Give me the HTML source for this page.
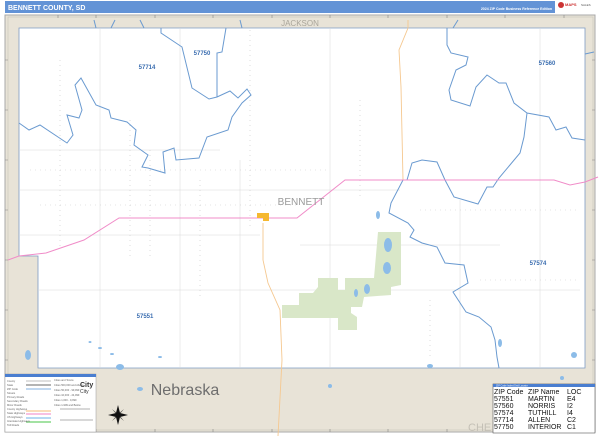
<!DOCTYPE html>
<html><head><meta charset="utf-8"><style>
html,body{margin:0;padding:0;background:#fff;width:600px;height:436px;overflow:hidden;font-family:"Liberation Sans",sans-serif}
</style></head><body>
<svg width="600" height="436" viewBox="0 0 600 436" xmlns="http://www.w3.org/2000/svg" font-family="Liberation Sans, sans-serif">
<rect x="5" y="1" width="550" height="12" fill="#6393d6"/>
<text x="8" y="10" font-size="7" font-weight="bold" fill="#fff">BENNETT COUNTY, SD</text>
<text x="552" y="10" font-size="3.5" fill="#fff" text-anchor="end" font-weight="bold">2024 ZIP Code Business Reference Edition</text>
<circle cx="561" cy="5" r="3" fill="#c33"/><text x="565" y="6" font-size="4" fill="#c33" font-weight="bold">MAPS</text>
<text x="581" y="6" font-size="3" fill="#555">SALES</text>
<rect x="5" y="15" width="590" height="417" fill="#e8e3d7" stroke="#a8a8a8" stroke-width="1"/>
<rect x="8" y="17" width="585" height="413" fill="none" stroke="#c8c4b8" stroke-width="0.6"/>
<g stroke="#888" stroke-width="0.6">
<path d="M58 15v3M96 15v3M155 15v3M213 15v3M272 15v3M330 15v3M388 15v3M447 15v3M505 15v3M564 15v3M58 429v3M96 429v3M155 429v3M213 429v3M272 429v3M330 429v3M388 429v3M447 429v3M505 429v3M564 429v3M5 60h3M5 110h3M5 160h3M5 210h3M5 260h3M5 310h3M5 360h3M5 410h3M592 60h3M592 110h3M592 160h3M592 210h3M592 260h3M592 310h3M592 360h3M592 410h3"/>
</g>
<text x="300" y="26" font-size="8" fill="#a9a59a" text-anchor="middle">JACKSON</text>
<text x="185" y="395" font-size="16" fill="#6e6e6e" text-anchor="middle">Nebraska</text>
<text x="468" y="431" font-size="11" fill="#c4c0b6">CHE</text>
<path d="M19 28H585V368H38V256H19Z" fill="#fff" stroke="#7e9cc4" stroke-width="0.8"/>
<g stroke="#d8d8d8" stroke-width="0.5" fill="none">
<path d="M19 190H400M38 290H580M19 150H220M100 28V368M180 28V368M240 160V368M330 28V368M460 200V368M540 28V368M19 235H260M300 245H500"/>
</g>
<g stroke="#c9c9c9" stroke-width="0.6" stroke-dasharray="1 4" fill="none">
<path d="M30 170H330M40 205H300M60 60V250M130 120V260M150 150V260M200 180V300M250 30V230M360 100V200M420 210H580M430 300V360M480 280H580"/>
</g>
<g fill="none" stroke="#6a9ad0" stroke-width="1">
<path d="M161 28L161 33L176 43L182 47L192 88L209 99L217 97L230 91L238 98L247 89L251 95L242 103L232 117L228 130L207 137L199 158L176 160L174 148L163 152L165 173L148 168L142 167L148 155L134 145L136 130L127 122L111 118L109 110L96 105L81 78L75 85L82 110L79 118L67 115L73 135L67 143L40 125L29 130L19 123"/>
<path d="M226 28L222 52L217 53L217 97"/>
<path d="M94 20L96 28M115 20L111 28M140 20L144 28M240 20L242 28M458 20L453 28M585 54L594 52"/>
<path d="M447 28L447 45L451 53L468 57L466 65L456 70L449 90L451 100L470 106L476 87L487 75L499 83L506 83L514 103L527 113L549 117L556 130L566 127L572 138L585 140"/>
<path d="M527 113L524 137L520 153L499 178L493 187L487 187L478 204L454 197L445 180L437 162L422 160L412 163L407 180L403 180L391 203L389 213L408 223L414 230L410 237L422 243L437 247L445 263L464 265L468 283L453 292L466 312L479 317L491 327L495 340L497 357L499 368"/>
</g>
<path d="M408 20L408 28L399 50L401 87L403 180" fill="none" stroke="#f5c890" stroke-width="0.9"/>
<path d="M263 223L263 260L268 283L280 310L282 360L278 436" fill="none" stroke="#f5c890" stroke-width="0.9"/>
<path d="M282 305L299 305L299 293L313 293L318 287L318 278L338 278L338 290L345 290L345 278L374 278L378 232L401 232L401 285L391 287L391 295L364 297L362 307L351 307L351 313L357 317L357 330L338 330L338 318L282 318Z" fill="#d9e7c8"/>
<g fill="#8cbce8">
<ellipse cx="388" cy="245" rx="4" ry="7"/><ellipse cx="387" cy="268" rx="4" ry="6"/><ellipse cx="367" cy="289" rx="3" ry="5"/><ellipse cx="356" cy="293" rx="2" ry="4"/><ellipse cx="378" cy="215" rx="2" ry="4"/><ellipse cx="500" cy="343" rx="2" ry="4"/><ellipse cx="574" cy="355" rx="3" ry="3"/><ellipse cx="28" cy="355" rx="3" ry="5"/><ellipse cx="120" cy="367" rx="4" ry="3"/><ellipse cx="140" cy="389" rx="3" ry="2"/><ellipse cx="330" cy="386" rx="2" ry="2"/><ellipse cx="430" cy="366" rx="3" ry="2"/><ellipse cx="562" cy="378" rx="2" ry="2"/>
<ellipse cx="100" cy="348" rx="2" ry="1"/><ellipse cx="112" cy="354" rx="2" ry="1"/><ellipse cx="90" cy="342" rx="1.5" ry="1"/><ellipse cx="160" cy="357" rx="2" ry="1"/>
</g>
<path d="M8 260L19 256L46 253L84 240L119 218L297 218L345 180L554 180L570 185L585 182L598 177" fill="none" stroke="#f08cc8" stroke-width="1"/>
<rect x="257" y="213" width="12" height="5" fill="#f5b830"/><rect x="263" y="217" width="6" height="4" fill="#f5b830"/>
<text x="301" y="205" font-size="10" fill="#9a9a9a" text-anchor="middle">BENNETT</text>
<g font-size="6" font-weight="bold" fill="#3a6db0" text-anchor="middle">
<text x="147" y="69">57714</text><text x="202" y="55">57750</text><text x="547" y="65">57560</text><text x="538" y="265">57574</text><text x="145" y="318">57551</text>
</g>
<rect x="5" y="374" width="91" height="58" fill="#fff" stroke="#999" stroke-width="0.5"/>
<rect x="5" y="374" width="91" height="3" fill="#4a7ed0"/>
<g stroke-width="1.2">
<path d="M26 381h25" stroke="#ccc"/><path d="M26 385h25" stroke="#888"/><path d="M26 389h25" stroke="#9cc0e8"/>
<path d="M26 411h25" stroke="#f7c890"/><path d="M26 414h25" stroke="#f49ad0"/><path d="M26 418h25" stroke="#8cc0ec"/><path d="M26 422h25" stroke="#6cd06c"/>
</g>
<g font-size="2.6" fill="#666"><text x="7" y="382">County</text><text x="7" y="386">State</text><text x="7" y="390">ZIP Code</text><text x="7" y="394">Streets</text><text x="7" y="398">Primary Roads</text><text x="7" y="402">Secondary Roads</text><text x="7" y="406">Minor Roads</text><text x="7" y="410">County Highways</text><text x="7" y="414">State Highways</text><text x="7" y="418">US Highways</text><text x="7" y="422">Interstate Highways</text><text x="7" y="426">Toll Roads</text>
<text x="54" y="381">Cities and Towns</text><text x="54" y="386">Cities 500,000 and Above</text><text x="54" y="391">Cities 50,000 - 99,999</text><text x="54" y="396">Cities 10,000 - 24,999</text><text x="54" y="401">Cities 1,000 - 9,999</text><text x="54" y="406">Cities 1-999 and Below</text></g>
<text x="80" y="387" font-size="7" fill="#333" font-weight="bold">City</text><text x="80" y="393" font-size="5" fill="#333">City</text>
<path d="M60 420h33M60 409h30" stroke="#666" stroke-width="0.6"/>
<g transform="translate(118,415)" fill="#111"><path d="M0-10L2-2L10 0L2 2L0 10L-2 2L-10 0L-2-2Z"/><path d="M-6-6L0-1L6-6L1 0L6 6L0 1L-6 6L-1 0Z" opacity=".7"/></g>
<rect x="493" y="384" width="102" height="49" fill="#fff" stroke="#555" stroke-width="0.6"/>
<rect x="493" y="384" width="102" height="3" fill="#4a7ed0"/>
<text x="496" y="386.5" font-size="2.5" fill="#fff">ZIP Code Index/Grid Locator</text>
<g font-size="7" fill="#111">
<text x="494" y="394">ZIP Code</text><text x="528" y="394">ZIP Name</text><text x="567" y="394">LOC</text>
<text x="494" y="401">57551</text><text x="528" y="401">MARTIN</text><text x="567" y="401">E4</text>
<text x="494" y="408">57560</text><text x="528" y="408">NORRIS</text><text x="567" y="408">I2</text>
<text x="494" y="415">57574</text><text x="528" y="415">TUTHILL</text><text x="567" y="415">I4</text>
<text x="494" y="422">57714</text><text x="528" y="422">ALLEN</text><text x="567" y="422">C2</text>
<text x="494" y="429">57750</text><text x="528" y="429">INTERIOR</text><text x="567" y="429">C1</text>
</g>
</svg>
</body></html>
